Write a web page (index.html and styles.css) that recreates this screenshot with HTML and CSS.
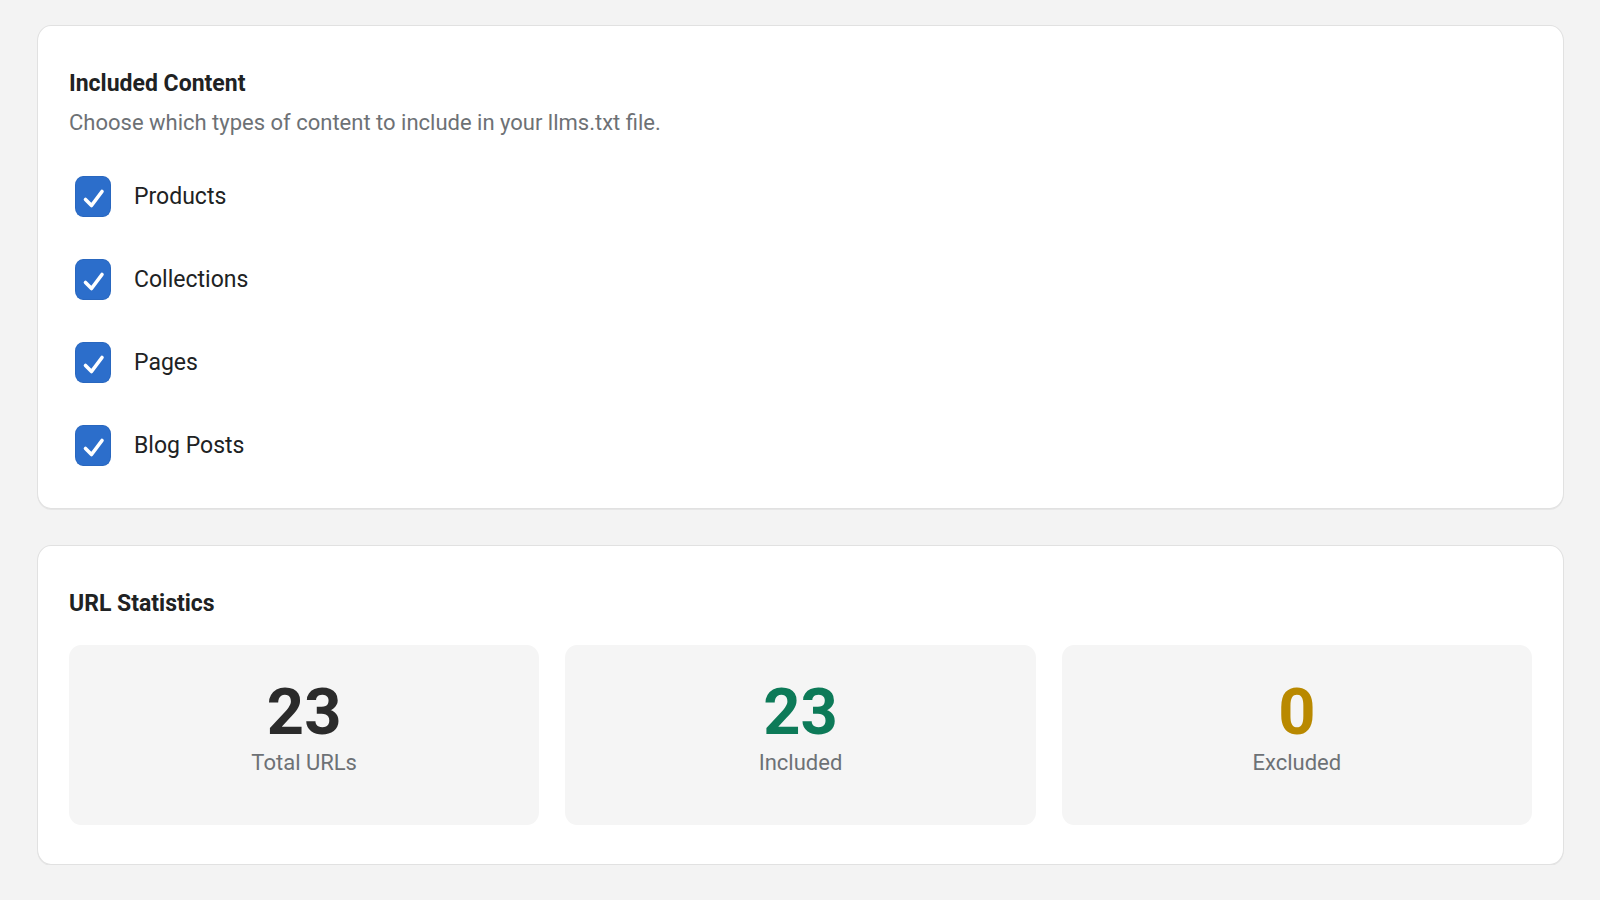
FILE: index.html
```html
<!DOCTYPE html>
<html lang="en">
<head>
<meta charset="utf-8">
<title>llms.txt settings</title>
<link rel="stylesheet" href="styles.css">
</head>
<body>
<main class="page">
  <section class="card card-content">
    <h2 class="card-title">Included Content</h2>
    <p class="card-subtitle">Choose which types of content to include in your llms.txt file.</p>
    <ul class="option-list">
      <li class="option">
        <span class="checkbox"><svg viewBox="0 0 36 41" width="36" height="41" aria-hidden="true"><polyline points="10.5,23.5 16.5,29.5 27,15.5" fill="none" stroke="#fff" stroke-width="3.6" stroke-linecap="round" stroke-linejoin="round"/></svg></span>
        <span class="option-label">Products</span>
      </li>
      <li class="option">
        <span class="checkbox"><svg viewBox="0 0 36 41" width="36" height="41" aria-hidden="true"><polyline points="10.5,23.5 16.5,29.5 27,15.5" fill="none" stroke="#fff" stroke-width="3.6" stroke-linecap="round" stroke-linejoin="round"/></svg></span>
        <span class="option-label">Collections</span>
      </li>
      <li class="option">
        <span class="checkbox"><svg viewBox="0 0 36 41" width="36" height="41" aria-hidden="true"><polyline points="10.5,23.5 16.5,29.5 27,15.5" fill="none" stroke="#fff" stroke-width="3.6" stroke-linecap="round" stroke-linejoin="round"/></svg></span>
        <span class="option-label">Pages</span>
      </li>
      <li class="option">
        <span class="checkbox"><svg viewBox="0 0 36 41" width="36" height="41" aria-hidden="true"><polyline points="10.5,23.5 16.5,29.5 27,15.5" fill="none" stroke="#fff" stroke-width="3.6" stroke-linecap="round" stroke-linejoin="round"/></svg></span>
        <span class="option-label">Blog Posts</span>
      </li>
    </ul>
  </section>

  <section class="card card-stats">
    <h2 class="card-title">URL Statistics</h2>
    <div class="stats-grid">
      <div class="stat">
        <div class="stat-value stat-total">23</div>
        <div class="stat-label">Total URLs</div>
      </div>
      <div class="stat">
        <div class="stat-value stat-included">23</div>
        <div class="stat-label">Included</div>
      </div>
      <div class="stat">
        <div class="stat-value stat-excluded">0</div>
        <div class="stat-label">Excluded</div>
      </div>
    </div>
  </section>
</main>
</body>
</html>
```

FILE: styles.css
```css
* {
  box-sizing: border-box;
}

html, body {
  margin: 0;
  padding: 0;
}

body {
  background: #f3f3f3;
  font-family: Roboto, "Liberation Sans", Arial, sans-serif;
  color: #202223;
  -webkit-font-smoothing: antialiased;
}

.page {
  display: flex;
  flex-direction: column;
  gap: 36px;
  padding: 25px 36px 0 37px;
}

.card {
  background: #ffffff;
  border: 1px solid #e1e1e1;
  border-radius: 14px / 16px;
  box-shadow: 0 1px 0 rgba(0, 0, 0, 0.05);
  padding: 42px 31px;
}

.card-stats {
  padding-bottom: 39px;
}

.card-title {
  margin: 0;
  font-size: 23px;
  line-height: 32px;
  font-weight: 700;
  color: #202223;
}

.card-subtitle {
  margin: 7px 0 0;
  font-size: 22px;
  line-height: 32px;
  font-weight: 400;
  color: #6d7175;
}

.option-list {
  list-style: none;
  margin: 37px 0 0;
  padding: 0;
  display: flex;
  flex-direction: column;
  gap: 42px;
}

.option {
  display: flex;
  align-items: center;
  height: 41px;
}

.checkbox {
  display: flex;
  width: 36px;
  height: 41px;
  margin-left: 6px;
  background: #2c6ecb;
  border-radius: 8px / 9px;
  box-shadow: inset 0 0 0 1px rgba(0, 0, 0, 0.06);
}

.option-label {
  margin-left: 23px;
  font-size: 23px;
  line-height: 32px;
  color: #202223;
}

.stats-grid {
  margin-top: 25px;
  display: grid;
  grid-template-columns: repeat(3, 1fr);
  gap: 26px;
}

.stat {
  height: 180px;
  padding-top: 33px;
  background: #f5f5f5;
  border-radius: 12px / 13px;
  text-align: center;
}

.stat-value {
  font-size: 65px;
  line-height: 69px;
  font-weight: 700;
}

.stat-total {
  color: #2b2b2b;
}

.stat-included {
  color: #0d7a58;
}

.stat-excluded {
  color: #b98900;
}

.stat-label {
  margin-top: 1px;
  font-size: 22px;
  line-height: 30px;
  color: #6d7175;
}
```
